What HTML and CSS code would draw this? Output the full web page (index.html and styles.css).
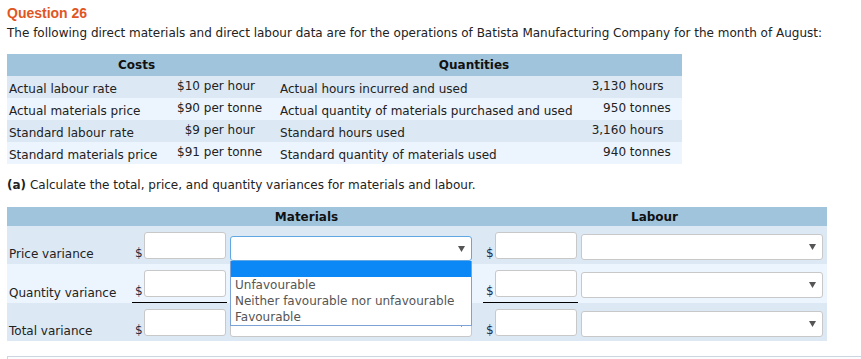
FILE: index.html
```html
<!DOCTYPE html>
<html>
    <head>
        <title>Question 26</title>
        <link rel="stylesheet" href="styles.css">
    </head>
    <body>
        <div class="question-title">Question 26</div>
        <p class="intro">The following direct materials and direct labour data are for the operations of Batista Manufacturing Company for the month of August:</p>

        <table class="data-table">
            <colgroup>
                <col class="col-cost-label">
                <col class="col-cost-value">
                <col class="col-qty-label">
                <col class="col-qty-value">
            </colgroup>
            <tr class="head-row">
                <th colspan="2">Costs</th>
                <th colspan="2">Quantities</th>
            </tr>
            <tr class="row-dark">
                <td class="cell-label">Actual labour rate</td>
                <td class="cell-value cost-value"><span class="amt amt-cost">$10</span> per hour</td>
                <td class="cell-label qty-label">Actual hours incurred and used</td>
                <td class="cell-value qty-value"><span class="amt amt-qty">3,130</span> hours</td>
            </tr>
            <tr class="row-light">
                <td class="cell-label">Actual materials price</td>
                <td class="cell-value cost-value"><span class="amt amt-cost">$90</span> per tonne</td>
                <td class="cell-label qty-label">Actual quantity of materials purchased and used</td>
                <td class="cell-value qty-value"><span class="amt amt-qty">950</span> tonnes</td>
            </tr>
            <tr class="row-dark">
                <td class="cell-label">Standard labour rate</td>
                <td class="cell-value cost-value"><span class="amt amt-cost">$9</span> per hour</td>
                <td class="cell-label qty-label">Standard hours used</td>
                <td class="cell-value qty-value"><span class="amt amt-qty">3,160</span> hours</td>
            </tr>
            <tr class="row-light">
                <td class="cell-label">Standard materials price</td>
                <td class="cell-value cost-value"><span class="amt amt-cost">$91</span> per tonne</td>
                <td class="cell-label qty-label">Standard quantity of materials used</td>
                <td class="cell-value qty-value"><span class="amt amt-qty">940</span> tonnes</td>
            </tr>
        </table>

        <p class="part"><b>(a)</b> Calculate the total, price, and quantity variances for materials and labour.</p>

        <table class="answer-table">
            <colgroup>
                <col class="col-answer-label">
                <col class="col-money">
                <col class="col-pick">
                <col class="col-money">
                <col class="col-pick-last">
            </colgroup>
            <tr class="head-row">
                <th></th>
                <th colspan="2">Materials</th>
                <th colspan="2">Labour</th>
            </tr>
            <tr class="row-dark">
                <td class="answer-label">Price variance</td>
                <td><div class="money"><span class="dollar">$</span><input type="text" class="input-amount"></div></td>
                <td class="pick-cell">
                    <div class="pick pick-open">
                        <svg class="arrow" width="7" height="6" viewBox="0 0 7 6"><polygon points="0,0 7,0 3.5,6" fill="#555"/></svg>
                        <div class="pick-list">
                            <div class="pick-option pick-option-active"></div>
                            <div class="pick-option">Unfavourable</div>
                            <div class="pick-option">Neither favourable nor unfavourable</div>
                            <div class="pick-option">Favourable</div>
                        </div>
                    </div>
                </td>
                <td><div class="money"><span class="dollar">$</span><input type="text" class="input-amount"></div></td>
                <td class="pick-cell">
                    <div class="pick"><svg class="arrow" width="7" height="6" viewBox="0 0 7 6"><polygon points="0,0 7,0 3.5,6" fill="#555"/></svg></div>
                </td>
            </tr>
            <tr class="row-light">
                <td class="answer-label">Quantity variance</td>
                <td><div class="money money-sum"><span class="dollar">$</span><input type="text" class="input-amount"></div></td>
                <td class="pick-cell">
                    <div class="pick"><svg class="arrow" width="7" height="6" viewBox="0 0 7 6"><polygon points="0,0 7,0 3.5,6" fill="#555"/></svg></div>
                </td>
                <td><div class="money money-sum"><span class="dollar">$</span><input type="text" class="input-amount"></div></td>
                <td class="pick-cell">
                    <div class="pick"><svg class="arrow" width="7" height="6" viewBox="0 0 7 6"><polygon points="0,0 7,0 3.5,6" fill="#555"/></svg></div>
                </td>
            </tr>
            <tr class="row-dark">
                <td class="answer-label">Total variance</td>
                <td><div class="money"><span class="dollar">$</span><input type="text" class="input-amount"></div></td>
                <td class="pick-cell">
                    <div class="pick"><svg class="arrow" width="7" height="6" viewBox="0 0 7 6"><polygon points="0,0 7,0 3.5,6" fill="#555"/></svg></div>
                </td>
                <td><div class="money"><span class="dollar">$</span><input type="text" class="input-amount"></div></td>
                <td class="pick-cell">
                    <div class="pick"><svg class="arrow" width="7" height="6" viewBox="0 0 7 6"><polygon points="0,0 7,0 3.5,6" fill="#555"/></svg></div>
                </td>
            </tr>
        </table>

        <div class="next-part"></div>
    </body>
</html>
```

FILE: styles.css
```css
body {
    margin: 0;
    padding: 0 0 0 7px;
    font-family: "DejaVu Sans", Verdana, sans-serif;
    color: #222;
    background-color: #fff;
    overflow: hidden;
}

.question-title {
    padding-top: 4px;
    font-family: "Liberation Sans", Arial, sans-serif;
    font-size: 14px;
    line-height: 18px;
    font-weight: bold;
    color: #e0561f;
}

.intro {
    margin: 3px 0 0 0;
    font-size: 12px;
    line-height: 16px;
    white-space: nowrap;
}

/* cost / quantity data */
.data-table {
    margin-top: 13px;
    width: 675px;
    border-collapse: collapse;
    table-layout: fixed;
    font-size: 12px;
}

.col-cost-label { width: 161px; }
.col-cost-value { width: 98px; }
.col-qty-label { width: 314px; }
.col-qty-value { width: 102px; }

.head-row th {
    height: 19px;
    padding: 0;
    background-color: #a0c4dc;
    color: #111;
    font-weight: bold;
    text-align: center;
}

.row-dark { background-color: #dce9f5; }
.row-light { background-color: #ecf4fd; }

.data-table tr { height: 22px; }

.cell-label {
    padding: 0 0 2px 2px;
    vertical-align: bottom;
    white-space: nowrap;
}

.qty-label { padding-left: 14px; }

.cell-value {
    padding: 3px 0 0 0;
    vertical-align: top;
    white-space: nowrap;
}

.cost-value { padding-left: 9px; }
.qty-value { padding-left: 11px; }

.amt {
    display: inline-block;
    text-align: right;
}

.amt-cost { width: 23px; }
.amt-qty { width: 35px; }

.part {
    margin: 14px 0 0 0;
    font-size: 12px;
    line-height: 15px;
}

/* answer grid */
.answer-table {
    margin-top: 14px;
    width: 820px;
    border-collapse: collapse;
    table-layout: fixed;
    font-size: 12px;
}

.col-answer-label { width: 124px; }
.col-money { width: 97px; }
.col-pick { width: 254px; }
.col-pick-last { width: 248px; }

.answer-table td {
    padding: 0;
    vertical-align: top;
}

.answer-table td.answer-label {
    padding: 0 0 2px 2px;
    vertical-align: bottom;
    line-height: 15px;
    white-space: nowrap;
}

.money {
    display: flex;
    align-items: flex-end;
    margin: 0 1px;
    padding: 6px 0 5px 3px;
}

.money-sum {
    border-bottom: 1px solid #000;
}

.dollar {
    font-size: 12px;
    line-height: 12px;
    margin-right: 1px;
    color: #1e2a44;
}

.input-amount {
    width: 82px;
    height: 27px;
    box-sizing: border-box;
    margin: 0;
    padding: 0 4px;
    border: 1px solid #c8c8c8;
    border-radius: 3px;
    background-color: #fff;
}

.pick-cell {
    padding: 8px 0 0 2px !important;
}

.pick {
    position: relative;
    width: 242px;
    height: 26px;
    box-sizing: border-box;
    display: flex;
    justify-content: flex-end;
    align-items: center;
    padding-right: 6px;
    border: 1px solid #c8c8c8;
    border-radius: 3px;
    background-color: #fff;
}

.pick-open {
    margin-top: 2px;
    height: 25px;
    border-color: #5fa8e4;
}

/* open option list under the focused select */
.pick-list {
    position: absolute;
    top: calc(100% + 1px);
    left: -1px;
    width: 242px;
    box-sizing: border-box;
    border: 1px solid #7da2d6;
    border-top: none;
    background-color: #fff;
    color: #555;
    font-size: 12px;
    z-index: 2;
}

.pick-option {
    height: 16px;
    line-height: 16px;
    padding-left: 4px;
    white-space: nowrap;
}

.pick-option-active {
    background-color: #0b88f6;
}

.next-part {
    margin-top: 15px;
    height: 2px;
    border-top: 1px solid #cdd6e0;
    border-left: 1px solid #cdd6e0;
    background-color: #fbfcfe;
}
```
